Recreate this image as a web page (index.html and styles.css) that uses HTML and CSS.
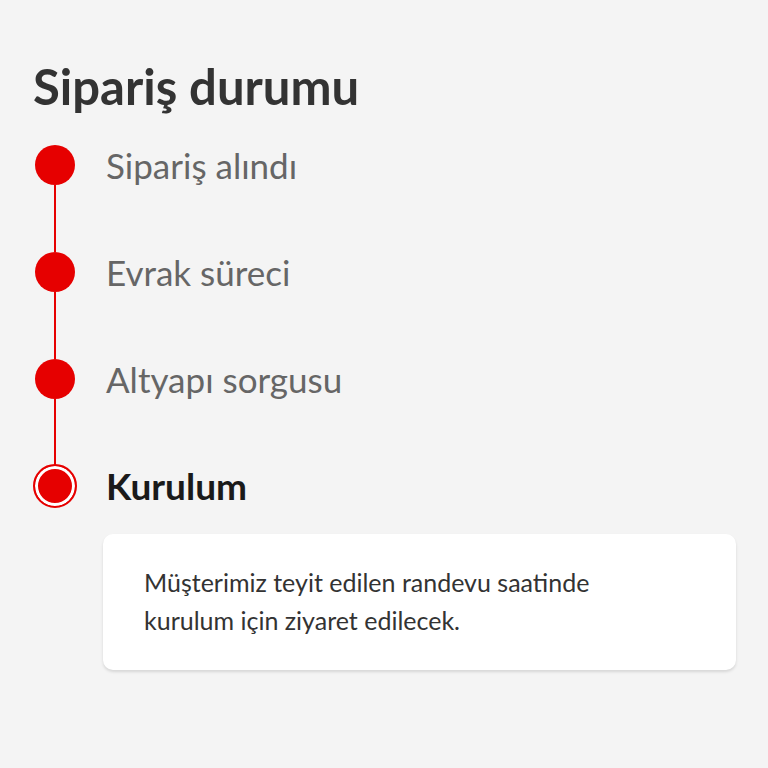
FILE: index.html
```html
<!DOCTYPE html>
<html lang="tr">
<head>
  <meta charset="UTF-8">
  <meta name="viewport" content="width=device-width, initial-scale=1.0">
  <title>Sipariş durumu</title>
  <link rel="stylesheet" href="styles.css">
</head>
<body>
  <div class="container">
    <h1>Sipariş durumu</h1>

    <ol class="timeline">
      <li class="step done">
        <div class="marker"><span class="dot"></span><span class="line"></span></div>
        <span class="label">Sipariş alındı</span>
      </li>
      <li class="step done">
        <div class="marker"><span class="dot"></span><span class="line"></span></div>
        <span class="label">Evrak süreci</span>
      </li>
      <li class="step done">
        <div class="marker"><span class="dot"></span><span class="line"></span></div>
        <span class="label">Altyapı sorgusu</span>
      </li>
      <li class="step current">
        <div class="marker"><span class="dot"></span></div>
        <span class="label">Kurulum</span>
      </li>
    </ol>

    <div class="info-card">
      <p>Müşterimiz teyit edilen randevu saatinde kurulum için ziyaret edilecek.</p>
    </div>
  </div>
</body>
</html>
```

FILE: styles.css
```css
:root {
  --red: #e60000;
  --bg: #f4f4f4;
  --text-muted: #666;
  --text-dark: #1a1a1a;
}

* {
  box-sizing: border-box;
  margin: 0;
  padding: 0;
}

body {
  font-family: Lato, "Noto Sans", sans-serif;
  background: var(--bg);
  color: #333;
  min-height: 100vh;
}

.container {
  padding: 56px 32px 0 33px;
}

h1 {
  font-size: 49px;
  font-weight: 700;
  color: #333;
  line-height: 60px;
  margin-bottom: 29px;
}

.timeline {
  list-style: none;
}

.step {
  display: flex;
  gap: 29px;
  height: 107px;
}

.step.current {
  height: auto;
}

.marker {
  width: 44px;
  display: flex;
  flex-direction: column;
  align-items: center;
}

.dot {
  width: 40px;
  height: 40px;
  border-radius: 50%;
  background: var(--red);
  flex-shrink: 0;
}

.line {
  flex: 1;
  width: 2px;
  background: var(--red);
}

.step.current .dot {
  width: 44px;
  height: 44px;
  margin-top: -2px;
  border: 2px solid var(--red);
  background: var(--red);
  box-shadow: inset 0 0 0 3px #fff;
}

.label {
  font-size: 35px;
  line-height: 40px;
  color: var(--text-muted);
}

.step.current .label {
  font-size: 37px;
  font-weight: 700;
  color: var(--text-dark);
}

.info-card {
  margin: 26px 0 0 70px;
  background: #fff;
  border-radius: 10px;
  box-shadow: 0 2px 3px rgba(0, 0, 0, 0.12);
  padding: 29px 40px 31px 41px;
}

.info-card p {
  max-width: 470px;
  font-size: 25px;
  line-height: 38px;
  color: #333;
}
```
